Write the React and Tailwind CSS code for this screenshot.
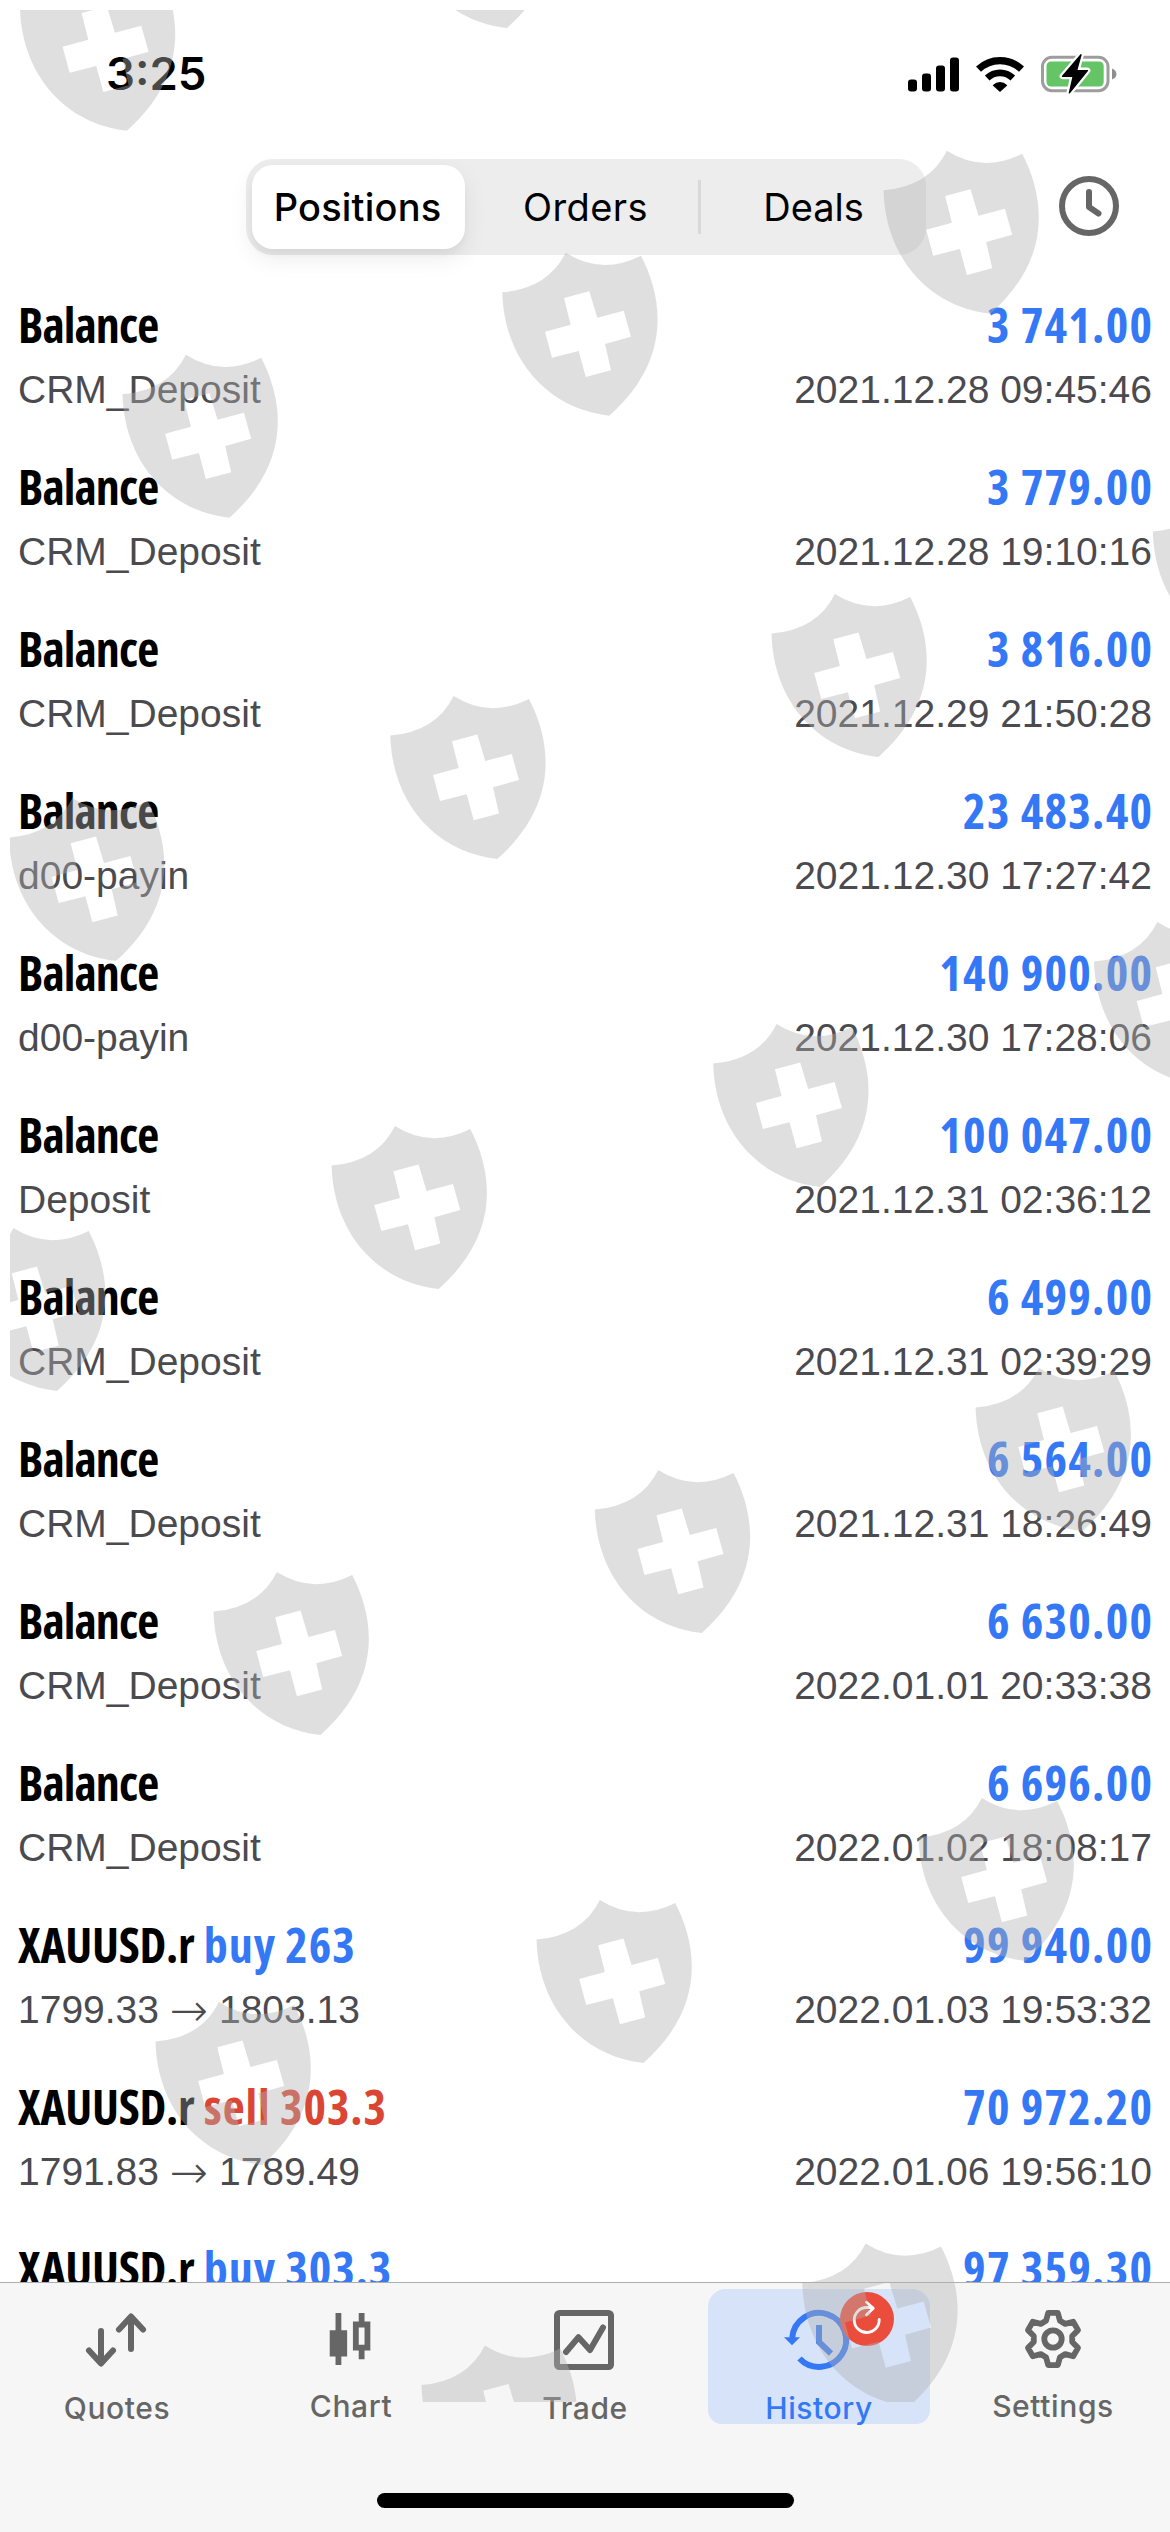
const transactions = [
  { title: "Balance", amount: "3 741.00", note: "CRM_Deposit", date: "2021.12.28 09:45:46" },
  { title: "Balance", amount: "3 779.00", note: "CRM_Deposit", date: "2021.12.28 19:10:16" },
  { title: "Balance", amount: "3 816.00", note: "CRM_Deposit", date: "2021.12.29 21:50:28" },
  { title: "Balance", amount: "23 483.40", note: "d00-payin", date: "2021.12.30 17:27:42" },
  { title: "Balance", amount: "140 900.00", note: "d00-payin", date: "2021.12.30 17:28:06" },
  { title: "Balance", amount: "100 047.00", note: "Deposit", date: "2021.12.31 02:36:12" },
  { title: "Balance", amount: "6 499.00", note: "CRM_Deposit", date: "2021.12.31 02:39:29" },
  { title: "Balance", amount: "6 564.00", note: "CRM_Deposit", date: "2021.12.31 18:26:49" },
  { title: "Balance", amount: "6 630.00", note: "CRM_Deposit", date: "2022.01.01 20:33:38" },
  { title: "Balance", amount: "6 696.00", note: "CRM_Deposit", date: "2022.01.02 18:08:17" },
  { title: "XAUUSD.r", side: "buy", volume: "263", amount: "99 940.00", open: "1799.33", close: "1803.13", date: "2022.01.03 19:53:32" },
  { title: "XAUUSD.r", side: "sell", volume: "303.3", amount: "70 972.20", open: "1791.83", close: "1789.49", date: "2022.01.06 19:56:10" },
  { title: "XAUUSD.r", side: "buy", volume: "303.3", amount: "97 359.30", date: "" }
];

const sideClassNames = {
  buy: "text-[#3478f6]",
  sell: "text-[#db4634]"
};

// bottom tip of every shield
const shields = [
  [126.9, 130.7], [507, 28],
  [229.5, 517.7], [609.3, 415.7], [990.5, 313.7],
  [116, 961], [497.3, 859], [878.5, 757], [1259.8, 655],
  [57, 1391], [438.6, 1289], [820.2, 1187], [1201, 1085],
  [320.5, 1735], [701.8, 1633], [1082.6, 1531],
  [262.5, 2165], [643.5, 2063], [1025.5, 1961],
  [528.5, 2508.5], [909.3, 2406.5]
];

const gearPoints = [0, 60, 120, 180, 240, 300]
  .flatMap((angle) => {
    const a = (angle * Math.PI) / 180;
    return [[-7.2, -18.8], [-5, -27], [5, -27], [7.2, -18.8]].map(([x, y]) => {
      const px = 30 + x * Math.cos(a) - y * Math.sin(a);
      const py = 30 + x * Math.sin(a) + y * Math.cos(a);
      return `${px.toFixed(2)},${py.toFixed(2)}`;
    });
  })
  .join(" ");

const SignalIcon = () => (
  <svg width="51" height="36" viewBox="0 0 51 36">
    <rect x="0" y="23.5" width="9" height="12" rx="3" />
    <rect x="14" y="17.5" width="9" height="18" rx="3" />
    <rect x="28" y="9.5" width="9" height="26" rx="3" />
    <rect x="42" y="1.5" width="9" height="34" rx="3" />
  </svg>
);

const WifiIcon = () => (
  <svg width="50" height="36" viewBox="0 0 50 36">
    <path d="M3.5 13.2A31 31 0 0 1 46.5 13.2" fill="none" stroke="#000" strokeWidth="7.2" />
    <path d="M12.2 22A18.5 18.5 0 0 1 37.8 22" fill="none" stroke="#000" strokeWidth="6.6" />
    <path d="M17.6 29.2Q25 22.8 32.4 29.2L25 36Z" />
  </svg>
);

const BatteryIcon = () => (
  <svg width="76" height="40" viewBox="0 0 76 40">
    <rect x="1.5" y="3.2" width="65.5" height="33.5" rx="9.5" fill="none" stroke="#9d9d9d" strokeWidth="3" />
    <rect x="5.5" y="7.4" width="57.2" height="25.2" rx="4.5" fill="#65c466" />
    <path d="M71 14.5Q75.4 16 75.4 20T71 25.5Z" fill="#8f8f8f" />
    <path d="M40 0.8L21.6 22.3H32.2L28.4 38.8L46.4 16.6H35.6Z" fill="#000" stroke="#fff" strokeWidth="6" strokeLinejoin="round" />
    <path d="M40 0.8L21.6 22.3H32.2L28.4 38.8L46.4 16.6H35.6Z" fill="#000" stroke="#000" strokeWidth="1.4" strokeLinejoin="round" />
  </svg>
);

const ClockIcon = () => (
  <svg width="60" height="60" viewBox="0 0 60 60" fill="none" stroke="#666" strokeWidth="6" strokeLinecap="round" strokeLinejoin="round">
    <circle cx="30" cy="30" r="27" />
    <path d="M30 16V31L39.5 37.5" />
  </svg>
);

const QuotesIcon = () => (
  <svg className="overflow-visible" width="60" height="60" viewBox="0 0 60 60" fill="none" stroke="currentColor" strokeWidth="6" strokeLinecap="round" strokeLinejoin="round">
    <path d="M14 21V53M2 40.5L14 53.5L26 40.5M44 39V7M32 19.5L44 6.5L56 19.5" />
  </svg>
);

const ChartIcon = () => (
  <svg width="60" height="60" viewBox="0 0 60 60" fill="currentColor">
    <path d="M14 3H20V21H26V48H20V57H14V48H8V21H14Z" />
    <path fillRule="evenodd" d="M38 3H44V12H50V42H44V51H38V42H32V12H38ZM38 18V36H44V18Z" />
  </svg>
);

const TradeIcon = () => (
  <svg className="overflow-visible" width="60" height="60" viewBox="1 0 60 60" fill="none" stroke="currentColor" strokeWidth="6" strokeLinejoin="round">
    <rect x="3" y="3" width="54" height="54" rx="2.5" />
    <path d="M12 42L24.5 27.2L36 40L49 17.5" strokeLinecap="round" />
  </svg>
);

const HistoryIcon = () => (
  <svg className="overflow-visible" width="60" height="60" viewBox="0 0 60 60" fill="none" stroke="currentColor" strokeWidth="6">
    <path d="M3.2 28A27 27 0 1 1 10.5 48.5" />
    <path d="M30 15V32L42 43.5" />
    <path d="M-5 27.3H11L3 35.3Z" fill="currentColor" stroke="none" />
  </svg>
);

const SettingsIcon = () => (
  <svg width="60" height="60" viewBox="0 0 60 60" fill="none" stroke="currentColor" strokeWidth="6" strokeLinejoin="round">
    <polygon points={gearPoints} />
    <circle cx="30" cy="30" r="9" />
  </svg>
);

const tabs = [
  { label: "Quotes", icon: QuotesIcon },
  { label: "Chart", icon: ChartIcon },
  { label: "Trade", icon: TradeIcon },
  { label: "History", icon: HistoryIcon, active: true },
  { label: "Settings", icon: SettingsIcon }
];

const StatusBar = () => (
  <div className="flex h-[148px] shrink-0 items-center justify-between pl-[106px] pr-[53px]">
    <span className="text-[45.5px] font-semibold leading-none">3:25</span>
    <div className="flex items-center gap-4">
      <SignalIcon />
      <WifiIcon />
      <BatteryIcon />
    </div>
  </div>
);

const Header = () => (
  <div className="flex h-[143px] shrink-0 items-start justify-between pl-[246px] pr-[51px] pt-[11px]">
    <div className="flex h-24 w-[680px] items-center rounded-[27px] bg-[#ededed] p-[6px] text-[38px] leading-none">
      <div className="flex h-full w-[213px] items-center justify-center rounded-[21px] bg-white pr-[2px] font-medium tracking-[0.2px] shadow-[0_9px_24px_rgba(0,0,0,0.08),0_6px_6px_rgba(0,0,0,0.03)]">
        Positions
      </div>
      <div className="flex h-[54px] flex-1 items-center justify-center border-r-[3px] border-[#d9d9d9] pl-2 tracking-[0.4px]">Orders</div>
      <div className="flex w-[219px] items-center justify-center pl-[6px]">Deals</div>
    </div>
    <div className="pt-[17px]">
      <ClockIcon />
    </div>
  </div>
);

const TransactionRow = ({ item }) => (
  <li className="h-[162px] px-[18px] pt-[2px]">
    <div className="flex h-16 justify-between whitespace-pre font-['Open_Sans'] text-[48px] font-bold leading-[64px] [font-stretch:75%]">
      <p className={item.side ? "tracking-[-0.3px]" : "tracking-[-0.9px]"}>
        {item.title}
        {item.side ? (
          <span className={`tracking-[0.9px] ${sideClassNames[item.side]}`}> {item.side} {item.volume}</span>
        ) : null}
      </p>
      <p className="-mr-[1.3px] tracking-[1.3px] text-[#3478f6]">{item.amount}</p>
    </div>
    <div className="mt-px flex h-16 justify-between whitespace-pre font-['Liberation_Sans'] text-[39px] leading-[64px] text-[#4a4a4f]">
      {item.open ? (
        <p className="flex">
          {item.open}
          <span className="w-[60px] text-center font-['DejaVu_Sans'] text-[46px] font-extralight">→</span>
          {item.close}
        </p>
      ) : (
        <p>{item.note}</p>
      )}
      <p>{item.date}</p>
    </div>
  </li>
);

const RefreshBadge = () => (
  <span className="absolute left-[132px] top-[3px] size-[54px] rounded-full bg-[#eb4d3d]">
    <svg width="54" height="54" viewBox="0 0 54 54" fill="none" stroke="#fff" strokeWidth="2.8" strokeLinecap="round" strokeLinejoin="round">
      <path d="M39.2 27.5A12.5 12.5 0 1 1 26.7 15.5H32.5M26.5 10.2L33.3 16.3L26.5 22.8" />
    </svg>
  </span>
);

const TabBar = () => (
  <nav className="flex h-[250px] shrink-0 flex-col items-center border-t border-[#adadad] bg-[#f6f6f6]">
    <div className="flex w-full pt-[6px]">
      {tabs.map(({ label, icon: Icon, active }) => (
        <div key={label} className="flex flex-1 justify-center">
          <div className={`relative flex h-[135px] w-[222px] flex-col items-center pt-[21px] ${active ? "rounded-t-[18px] rounded-b-[14px] bg-[#d6e3f9] text-[#3478f6]" : "text-[#666]"}`}>
            <Icon />
            <span className="mt-[20px] text-[30px] font-medium leading-[36px] tracking-[0.6px]">{label}</span>
            {active ? <RefreshBadge /> : null}
          </div>
        </div>
      ))}
    </div>
    <div className="mt-[69px] h-[15px] w-[417px] rounded-full bg-black" />
  </nav>
);

const ShieldOverlay = () => (
  <svg className="pointer-events-none absolute inset-0" width="1170" height="2532" viewBox="0 0 1170 2532">
    <defs>
      <clipPath id="overlay-area">
        <rect x="10" y="10" width="1160" height="2392" />
      </clipPath>
      <path
        id="shield"
        fillRule="evenodd"
        d="M22.3 62.3Q68 58.5 85.7 22.7Q121.5 45.5 161 25.7C184 70 191 131 129.3 185.7C68 179 24 130 22.3 62.3ZM84 68L90.7 94.7L65 101.7L72 127.7L98.7 121L105.7 147L131 140.3L125 114L151 106.7L143.7 80.7L117.3 87.7L109.3 61.3Z"
      />
    </defs>
    <g clipPath="url(#overlay-area)" fill="#b1b1b1" fillOpacity="0.41">
      {shields.map(([x, y]) => (
        <use key={`${x}-${y}`} href="#shield" x={x - 129.3} y={y - 185.7} />
      ))}
    </g>
  </svg>
);

const App = () => (
  <div className="relative flex h-[2532px] w-[1170px] flex-col overflow-hidden bg-white font-[Inter] text-black">
    <StatusBar />
    <Header />
    <ul className="min-h-0 flex-1 overflow-hidden">
      {transactions.map((item, index) => (
        <TransactionRow key={index} item={item} />
      ))}
    </ul>
    <TabBar />
    <ShieldOverlay />
  </div>
);

export default App;
